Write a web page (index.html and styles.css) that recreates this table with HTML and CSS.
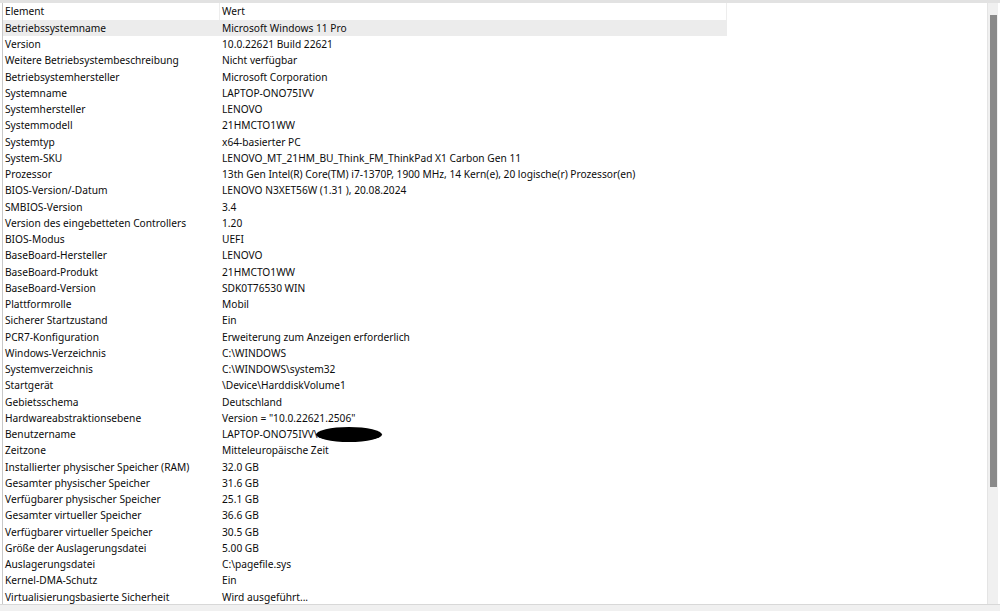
FILE: index.html
```html
<!DOCTYPE html>
<html lang="de">
<head>
<meta charset="utf-8">
<title>Systeminformationen</title>
<link rel="stylesheet" href="styles.css">
</head>
<body>
<div class="topband"></div>
<div class="window">
  <div class="list">
    <div class="row header"><span class="c1">Element</span><span class="c2">Wert</span></div>
    <div class="row selected"><span class="c1">Betriebssystemname</span><span class="c2">Microsoft Windows 11 Pro</span></div>
    <div class="row"><span class="c1">Version</span><span class="c2">10.0.22621 Build 22621</span></div>
    <div class="row"><span class="c1">Weitere Betriebsystembeschreibung</span><span class="c2">Nicht verfügbar</span></div>
    <div class="row"><span class="c1">Betriebsystemhersteller</span><span class="c2">Microsoft Corporation</span></div>
    <div class="row"><span class="c1">Systemname</span><span class="c2">LAPTOP-ONO75IVV</span></div>
    <div class="row"><span class="c1">Systemhersteller</span><span class="c2">LENOVO</span></div>
    <div class="row"><span class="c1">Systemmodell</span><span class="c2">21HMCTO1WW</span></div>
    <div class="row"><span class="c1">Systemtyp</span><span class="c2">x64-basierter PC</span></div>
    <div class="row"><span class="c1">System-SKU</span><span class="c2">LENOVO_MT_21HM_BU_Think_FM_ThinkPad X1 Carbon Gen 11</span></div>
    <div class="row"><span class="c1">Prozessor</span><span class="c2">13th Gen Intel(R) Core(TM) i7-1370P, 1900 MHz, 14 Kern(e), 20 logische(r) Prozessor(en)</span></div>
    <div class="row"><span class="c1">BIOS-Version/-Datum</span><span class="c2">LENOVO N3XET56W (1.31 ), 20.08.2024</span></div>
    <div class="row"><span class="c1">SMBIOS-Version</span><span class="c2">3.4</span></div>
    <div class="row"><span class="c1">Version des eingebetteten Controllers</span><span class="c2">1.20</span></div>
    <div class="row"><span class="c1">BIOS-Modus</span><span class="c2">UEFI</span></div>
    <div class="row"><span class="c1">BaseBoard-Hersteller</span><span class="c2">LENOVO</span></div>
    <div class="row"><span class="c1">BaseBoard-Produkt</span><span class="c2">21HMCTO1WW</span></div>
    <div class="row"><span class="c1">BaseBoard-Version</span><span class="c2">SDK0T76530 WIN</span></div>
    <div class="row"><span class="c1">Plattformrolle</span><span class="c2">Mobil</span></div>
    <div class="row"><span class="c1">Sicherer Startzustand</span><span class="c2">Ein</span></div>
    <div class="row"><span class="c1">PCR7-Konfiguration</span><span class="c2">Erweiterung zum Anzeigen erforderlich</span></div>
    <div class="row"><span class="c1">Windows-Verzeichnis</span><span class="c2">C:\WINDOWS</span></div>
    <div class="row"><span class="c1">Systemverzeichnis</span><span class="c2">C:\WINDOWS\system32</span></div>
    <div class="row"><span class="c1">Startgerät</span><span class="c2">\Device\HarddiskVolume1</span></div>
    <div class="row"><span class="c1">Gebietsschema</span><span class="c2">Deutschland</span></div>
    <div class="row"><span class="c1">Hardwareabstraktionsebene</span><span class="c2">Version = "10.0.22621.2506"</span></div>
    <div class="row"><span class="c1">Benutzername</span><span class="c2 redacted">LAPTOP-ONO75IVV\<span class="blot"></span></span></div>
    <div class="row"><span class="c1">Zeitzone</span><span class="c2">Mitteleuropäische Zeit</span></div>
    <div class="row"><span class="c1">Installierter physischer Speicher (RAM)</span><span class="c2">32.0 GB</span></div>
    <div class="row"><span class="c1">Gesamter physischer Speicher</span><span class="c2">31.6 GB</span></div>
    <div class="row"><span class="c1">Verfügbarer physischer Speicher</span><span class="c2">25.1 GB</span></div>
    <div class="row"><span class="c1">Gesamter virtueller Speicher</span><span class="c2">36.6 GB</span></div>
    <div class="row"><span class="c1">Verfügbarer virtueller Speicher</span><span class="c2">30.5 GB</span></div>
    <div class="row"><span class="c1">Größe der Auslagerungsdatei</span><span class="c2">5.00 GB</span></div>
    <div class="row"><span class="c1">Auslagerungsdatei</span><span class="c2">C:\pagefile.sys</span></div>
    <div class="row"><span class="c1">Kernel-DMA-Schutz</span><span class="c2">Ein</span></div>
    <div class="row"><span class="c1">Virtualisierungsbasierte Sicherheit</span><span class="c2">Wird ausgeführt...</span></div>
  </div>
  <div class="scrollbar"><div class="thumb"></div></div>
</div>
<div class="bottomband"></div>
</body>
</html>
```
FILE: styles.css
```css
html, body {
  margin: 0;
  padding: 0;
  background: #ffffff;
}
body {
  width: 1000px;
  height: 611px;
  overflow: hidden;
  font-family: "Noto Sans", "Open Sans", sans-serif;
  font-size: 10.2px;
  color: #0c0c0c;
  display: flex;
  flex-direction: column;
}
.topband {
  height: 3px;
  background: #e2e2e2;
  flex: none;
}
.window {
  flex: 1;
  display: flex;
  min-height: 0;
}
.list {
  flex: 1;
  border-left: 1px solid #c8c8c8;
  margin-left: 2px;
  overflow: hidden;
}
.row {
  display: grid;
  grid-template-columns: 216px 508px;
  width: 724px;
  height: 16.26px;
  line-height: 16.26px;
  white-space: nowrap;
}
.row .c1 {
  padding-left: 2px;
  overflow: hidden;
}
.row .c2 {
  padding-left: 3px;
}
.header {
  height: 16.8px;
  line-height: 16.8px;
}
.header .c2 {
  border-left: 1px solid #ededed;
  padding-left: 2px;
  border-right: 1px solid #ededed;
}
.selected {
  background: #ececec;
}
.redacted {
  position: relative;
}
.blot {
  position: absolute;
  left: 97px;
  top: 1px;
  width: 66px;
  height: 15px;
  background: #000;
  border-radius: 50%;
}
.scrollbar {
  flex: none;
  width: 10px;
  margin-right: 2px;
  background: #f0f0f0;
  border-left: 1px solid #e4e4e4;
  padding-top: 12px;
  display: flex;
  justify-content: center;
}
.thumb {
  width: 7px;
  height: 472px;
  background: #8a8a8a;
}
.bottomband {
  flex: none;
  height: 6px;
  background: #f0f0f0;
  border-top: 1px solid #d8d8d8;
}
```
